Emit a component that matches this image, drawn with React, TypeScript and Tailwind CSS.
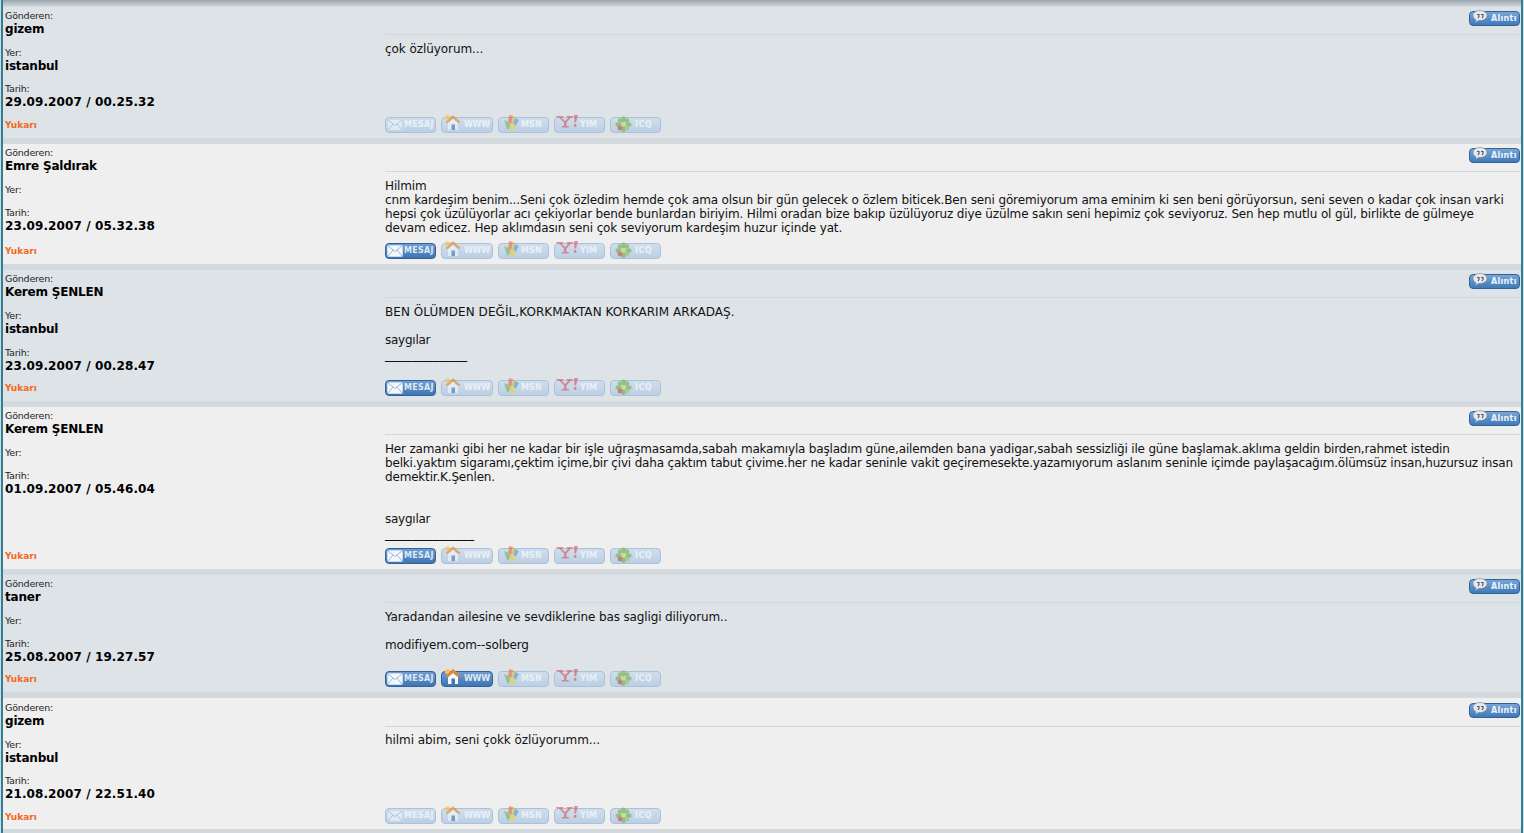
import { ReactNode } from 'react'

type Post = {
  user: string
  place?: string
  date: string
  active: string[]
  body: ReactNode
  height: string
  last?: boolean
  dateGap?: string
}

const posts: Post[] = [
  {
    user: 'gizem',
    place: 'istanbul',
    date: '29.09.2007 / 00.25.32',
    active: [],
    height: 'h-[131px]',
    body: <p className="tracking-[-0.07px]">çok özlüyorum...</p>,
  },
  {
    user: 'Emre Şaldırak',
    date: '23.09.2007 / 05.32.38',
    active: ['MESAJ'],
    height: 'h-[120px]',
    body: (
      <p className="tracking-[-0.13px]">
        Hilmim
        <br />
        cnm kardeşim benim...Seni çok özledim hemde çok ama olsun bir gün gelecek o özlem biticek.Ben seni göremiyorum ama eminim ki sen beni görüyorsun, seni seven o kadar çok insan varki
        <br />
        <span className="tracking-[-0.15px]">hepsi çok üzülüyorlar acı çekiyorlar bende bunlardan biriyim. Hilmi oradan bize bakıp üzülüyoruz diye üzülme sakın seni hepimiz çok seviyoruz. Sen hep mutlu ol gül, birlikte de gülmeye</span>
        <br />
        devam edicez. Hep aklımdasın seni çok seviyorum kardeşim huzur içinde yat.
      </p>
    ),
  },
  {
    user: 'Kerem ŞENLEN',
    place: 'istanbul',
    date: '23.09.2007 / 00.28.47',
    active: ['MESAJ'],
    height: 'h-[131px]',
    dateGap: 'mt-[11px]',
    body: (
      <p>
        <span className="tracking-[0.06px]">BEN ÖLÜMDEN DEĞİL,KORKMAKTAN KORKARIM ARKADAŞ.</span>
        <br />
        <br />
        <span className="tracking-[-0.25px]">saygılar</span>
        <br />
        <span className="text-[13.7px]">____________</span>
      </p>
    ),
  },
  {
    user: 'Kerem ŞENLEN',
    date: '01.09.2007 / 05.46.04',
    active: ['MESAJ'],
    height: 'h-[162px]',
    body: (
      <p>
        <span className="tracking-[-0.18px]">
          Her zamanki gibi her ne kadar bir işle uğraşmasamda,sabah makamıyla başladım güne,ailemden bana yadigar,sabah sessizliği ile güne başlamak.aklıma geldin birden,rahmet istedin belki.yaktım sigaramı,çektim içime,bir çivi daha çaktım tabut çivime.her ne kadar seninle vakit geçiremesekte.yazamıyorum aslanım seninle içimde paylaşacağım.ölümsüz insan,huzursuz insan demektir.K.Şenlen.
        </span>
        <br />
        <br />
        <br />
        <span className="tracking-[-0.25px]">saygılar</span>
        <br />
        <span className="text-[13.7px]">_____________</span>
      </p>
    ),
  },
  {
    user: 'taner',
    date: '25.08.2007 / 19.27.57',
    active: ['MESAJ', 'WWW'],
    height: 'h-[117px]',
    body: (
      <p>
        <span className="tracking-[-0.135px]">Yaradandan ailesine ve sevdiklerine bas sagligi diliyorum..</span>
        <br />
        <br />
        <span className="tracking-[-0.1px]">modifiyem.com--solberg</span>
      </p>
    ),
  },
  {
    user: 'gizem',
    place: 'istanbul',
    date: '21.08.2007 / 22.51.40',
    active: [],
    height: 'h-[131px]',
    last: true,
    body: <p className="tracking-[-0.06px]">hilmi abim, seni çokk özlüyorumm...</p>,
  },
]

const buttons = [
  { name: 'MESAJ', box: 'w-[51px] pl-[1px] gap-[1px] tracking-[0.3px]' },
  { name: 'WWW', box: 'w-[52px] pl-[2px] gap-[3px] tracking-[-0.2px]' },
  { name: 'MSN', box: 'w-[51px] pl-[4px] gap-[1px] tracking-[0.1px]' },
  { name: 'YIM', box: 'w-[51px] pl-[1px] gap-[2px] tracking-[0.1px]' },
  { name: 'ICQ', box: 'w-[51px] pl-[4px] gap-[3px] tracking-[0.5px]' },
]

function ButtonIcon({ name }: { name: string }) {
  if (name === 'MESAJ') {
    return (
      <svg width="16" height="12" viewBox="0 0 16 12" className="shrink-0">
        <rect x="0.5" y="0.5" width="15" height="11" rx="1" fill="#f4f8fc" stroke="#c9d8e8" />
        <path d="M1 1l7 5.500L15 1M1 11l5-6M15 11l-5-6" fill="none" stroke="#9db8d4" strokeWidth="1" />
      </svg>
    )
  }
  if (name === 'WWW') {
    return (
      <svg width="17" height="17" viewBox="0 0 17 17" className="shrink-0 -mt-[5px]">
        <circle cx="3.500" cy="3.500" r="2.500" fill="#f7c35a" />
        <path d="M9 1L1.500 8l2 1.200L9 4.500l5.500 4.700 2-1.200z" fill="#ee8422" />
        <path d="M4 9.200L9 5l5 4.200V16H4z" fill="#f6f8fb" />
        <rect x="7.500" y="10.500" width="3.500" height="5.500" fill="#3f76b4" />
      </svg>
    )
  }
  if (name === 'MSN') {
    return (
      <svg width="17" height="17" viewBox="0 0 17 17" className="shrink-0 -mt-[4px]">
        <path d="M6 0l4 1-1.500 8L5 8z" fill="#ea6a3a" />
        <path d="M10 1l3.500 2L10 9l-1.500 0z" fill="#f4b92c" />
        <path d="M1 5l5 2 1.500 4-3 4z" fill="#7ab648" />
        <path d="M7 9l4-1 1.500 6-5 2z" fill="#ecd534" />
        <path d="M12 3l4 2-3.500 6L10.500 8z" fill="#4b9ad4" />
      </svg>
    )
  }
  if (name === 'YIM') {
    return (
      <svg width="22" height="13" viewBox="0 0 22 13" className="shrink-0 -mt-[7px]">
        <path d="M0 1h7.500L7 2.500H5.500L9 6l3.500-3.500H11L10.500 1H17l-.5 1.500H15L10.500 7.500V11h2l.5 1.500H5.500L6 11h2V7.500L3 2.500H1z" fill="#d9525a" />
        <path d="M18 0h4l-2 7.500h-1.500zM18 9h2.300v2.800H18z" fill="#d9525a" />
      </svg>
    )
  }
  return (
    <svg width="17" height="17" viewBox="0 0 17 17" className="shrink-0 -mt-[2px]">
      <g fill="#6fb23f">
        <ellipse cx="8.500" cy="3.500" rx="2.300" ry="3" />
        <ellipse cx="8.500" cy="13" rx="2.300" ry="3" />
        <ellipse cx="3.500" cy="8.500" rx="3" ry="2.300" />
        <ellipse cx="13.500" cy="8.500" rx="3" ry="2.300" />
        <circle cx="5" cy="4.500" r="2.300" />
        <circle cx="12" cy="4.500" r="2.300" />
      </g>
      <circle cx="5" cy="12" r="2.400" fill="#c9473a" />
      <circle cx="12" cy="12" r="2.300" fill="#8ccb4e" />
      <circle cx="8.500" cy="8.500" r="2" fill="#e6d84a" />
    </svg>
  )
}

function ContactButton({ name, box, on }: { name: string; box: string; on: boolean }) {
  return (
    <span
      className={`${box} h-[16px] rounded-[4px] border flex items-center text-[8px] font-bold leading-none ${
        on
          ? 'bg-gradient-to-b from-[#6f9dd2] to-[#3d75b3] border-[#2f6399] text-[#dfe9f3]'
          : 'bg-gradient-to-b from-[#d0deec] to-[#bccfe4] border-[#a9c2dc] text-[#e9f0f7]'
      }`}
    >
      <span className={`flex ${on ? '' : 'opacity-60'}`}>
        <ButtonIcon name={name} />
      </span>
      {name}
    </span>
  )
}

function QuoteButton() {
  return (
    <span className="w-[51px] h-[15px] rounded-[4px] border border-[#2f6399] bg-gradient-to-b from-[#78a5d6] to-[#4079b8] flex items-center gap-[3px] pl-[2px] text-[8px] tracking-[0.3px] font-bold leading-none text-[#eef4fa]">
      <svg width="16" height="13" viewBox="0 0 16 13" className="shrink-0 -mt-[5px]">
        <path d="M8 .5c4 0 7 2.300 7 5s-3 5-7 5H6.500L3.500 12.500l.5-2.700C2 9 1 7.400 1 5.500c0-2.700 3-5 7-5z" fill="#e6e9ec" stroke="#6f7f90" strokeWidth=".6" />
        <path d="M5 4.500h2v2l-1 1.500M9 4.500h2v2l-1 1.500" fill="none" stroke="#4a5662" strokeWidth="1.100" />
      </svg>
      Alıntı
    </span>
  )
}

function PostRow({ post, odd }: { post: Post; odd: boolean }) {
  const label = 'text-[9.5px] tracking-[-0.2px] leading-[12px] text-[#222]'
  const name = 'text-[12px] tracking-[-0.2px] font-bold leading-[14px]'
  const tarihGap = post.dateGap ?? (post.place ? 'mt-[10px]' : 'mt-0')
  return (
    <div className={`${post.height} flex ${odd ? 'bg-[#dee3e8]' : 'bg-[#efefef]'}`}>
      <div className={`w-[380px] shrink-0 pl-[2px] flex flex-col text-black ${post.last ? 'pt-[4px] pb-[6px]' : 'pt-[3px] pb-[7px]'}`}>
        <div className={label}>Gönderen:</div>
        <div className={name}>{post.user}</div>
        <div className={`${label} mt-[11px]`}>Yer:</div>
        <div className={`${name} min-h-[11px]`}>{post.place}</div>
        <div className={`${label} ${tarihGap}`}>Tarih:</div>
        <div className="text-[12px] tracking-[0.1px] font-bold leading-[14px]">{post.date}</div>
        <div className="mt-auto text-[9px] font-bold leading-[12px] text-[#f26a1b]">Yukarı</div>
      </div>
      <div className="flex-1 min-w-0 pl-[2px] pr-[1px] flex flex-col pb-[5px]">
        <div className={`flex justify-end border-b border-[#d2d7dc] items-start shrink-0 ${post.last ? 'h-[29px] pt-[5px]' : 'h-[28px] pt-[4px]'}`}>
          <QuoteButton />
        </div>
        <div className={`flex-1 min-h-0 text-[12px] leading-[14px] text-[#111] ${post.last ? 'pt-[6px]' : 'pt-[7px]'}`}>{post.body}</div>
        <div className="flex gap-[5px]">
          {buttons.map((b) => (
            <ContactButton key={b.name} name={b.name} box={b.box} on={post.active.includes(b.name)} />
          ))}
        </div>
      </div>
    </div>
  )
}

export default function App() {
  return (
    <div className="h-[833px] overflow-hidden bg-[#d4d9de] px-[1px] font-['DejaVu_Sans','Verdana',sans-serif]">
      <div className="h-full border-x-2 border-[#2f7f96] bg-[#d4d9de]">
        <div className="h-[7px] bg-gradient-to-b from-[#9aa5ae] to-[#d4d9de]" />
        <div className="flex flex-col gap-[6px]">
          {posts.map((p, i) => (
            <PostRow key={i} post={p} odd={i % 2 === 0} />
          ))}
        </div>
      </div>
    </div>
  )
}
